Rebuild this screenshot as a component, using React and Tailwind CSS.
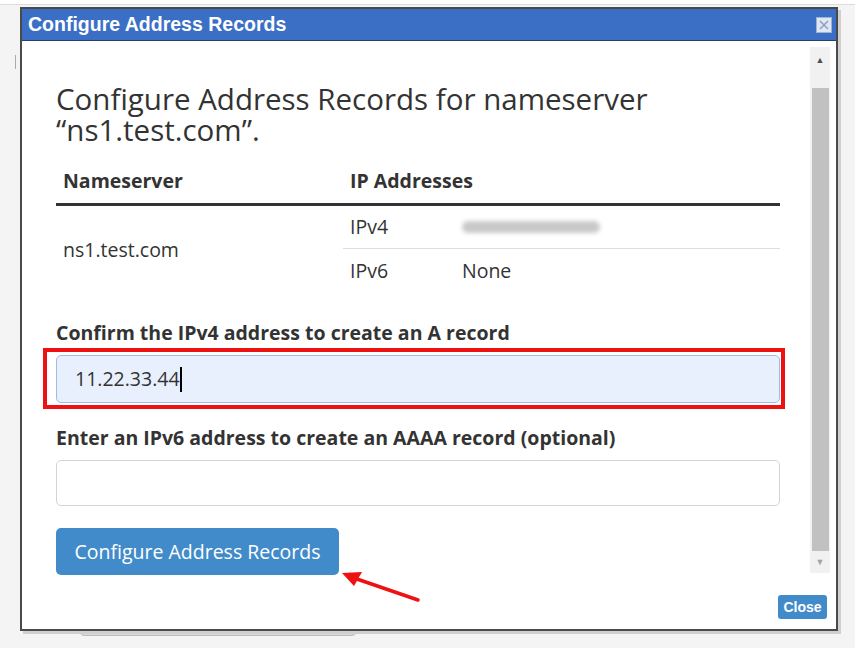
import React from 'react';

const sans = { fontFamily: '"Open Sans", "Noto Sans", sans-serif' };

function Scrollbar() {
  return (
    <div className="w-[20px] h-full bg-[#f1f1f1] flex flex-col items-center">
      <div className="h-[26px] w-full flex items-center justify-center text-[9px] text-[#505050]">▲</div>
      <div className="h-[15px]" />
      <div className="flex-1 w-[17px] bg-[#c1c1c1]" />
      <div className="h-[22px] w-full flex items-center justify-center text-[9px] text-[#a3a3a3]">▼</div>
    </div>
  );
}

export default function App() {
  return (
    <div className="relative w-[855px] h-[648px] overflow-hidden bg-[#f4f4f4]">
      {/* page behind the dialog */}
      <div className="h-[5px] bg-white border-b border-[#dcdcdc]" />
      <div className="absolute left-[80px] top-[628px] w-[276px] h-[8px] rounded-b-[4px] bg-[#d9d9d9] border border-[#bbbbbb]" />
      <div className="absolute left-[15px] top-[55px] w-[1px] h-[14px] bg-[#aaaaaa]" />

      {/* dialog */}
      <div className="absolute left-[20px] top-[7px] w-[818px] h-[624px] border-2 border-[#4a4a4a] bg-white flex flex-col shadow-[3px_3px_0_#cfcfcf]">
        <div className="h-[32px] bg-[#3b6fc6] border-b border-[#2a3f66] flex items-center justify-between pl-[6px] pr-[4px]">
          <span className="text-white font-bold text-[19.5px]" style={{ fontFamily: '"Liberation Sans", Arial, sans-serif' }}>
            Configure Address Records
          </span>
          <span className="w-[16px] h-[16px] bg-[#dfe7f3] border border-[#9fb3d3] flex items-center justify-center">
            <svg width="12" height="12" viewBox="0 0 12 12">
              <path d="M2 2 L10 10 M10 2 L2 10" stroke="#8fa2c0" strokeWidth="1.6" />
            </svg>
          </span>
        </div>

        <div className="flex pt-[6px] pr-[6px] h-[532px]">
          <div className="flex-1 pl-[34px] pr-[30px] pt-[36px] text-[#333333]" style={sans}>
            <h1 className="text-[29.5px] leading-[31px] font-normal text-[#333333]">
              Configure Address Records for nameserver
              <br />
              “ns1.test.com”.
            </h1>

            <div className="mt-[16px] text-[19.5px]">
              <div className="flex h-[45px] pb-[3px] border-b-[3px] border-[#333333] items-center">
                <div className="w-[287px] pl-[7px] font-bold">Nameserver</div>
                <div className="pl-[7px] font-bold">IP Addresses</div>
              </div>
              <div className="flex">
                <div className="w-[287px] pl-[7px] flex items-center">ns1.test.com</div>
                <div className="flex-1">
                  <div className="flex h-[43px] items-center border-b border-[#dddddd]">
                    <span className="w-[119px] pl-[7px]">IPv4</span>
                    <span className="w-[138px] h-[12px] rounded-full bg-[#c9c9c9] blur-[2px]" />
                  </div>
                  <div className="flex h-[44px] items-center">
                    <span className="w-[119px] pl-[7px]">IPv6</span>
                    <span>None</span>
                  </div>
                </div>
              </div>
            </div>

            <div className="mt-[25px] text-[19.5px] leading-[30px] font-bold">Confirm the IPv4 address to create an A record</div>
            <div className="-ml-[13px] -mr-[5px] border-[4px] border-[#ee1111] pl-[9px] pr-[1px] pt-[3px] pb-[2px]">
              <div className="h-[48px] rounded-[5px] border border-[#9cbde6] bg-[#e8f0fe] flex items-center pl-[18px] text-[19.5px] text-[#333333]">
                11.22.33.44
                <span className="inline-block w-[2px] h-[25px] bg-black" />
              </div>
            </div>

            <div className="mt-[14px] text-[19.5px] leading-[30px] font-bold">Enter an IPv6 address to create an AAAA record (optional)</div>
            <div className="mt-[7px] h-[46px] rounded-[5px] border border-[#d4d4d4] bg-white" />

            <button className="mt-[22px] h-[47px] w-[283px] rounded-[5px] bg-[#428bca] text-white text-[19.5px]" style={sans}>
              Configure Address Records
            </button>
          </div>
          <Scrollbar />
        </div>

        <div className="flex-1 flex justify-end items-end pr-[9px] pb-[10px]">
          <button
            className="h-[24px] w-[49px] rounded-[3px] bg-[#428bca] text-white text-[14px] font-bold"
            style={{ fontFamily: '"Liberation Sans", Arial, sans-serif' }}
          >
            Close
          </button>
        </div>
      </div>

      {/* annotation arrow */}
      <svg className="absolute left-[336px] top-[566px]" width="90" height="42" viewBox="0 0 90 42">
        <path d="M82 34 L18 12" stroke="#ee1111" strokeWidth="3.5" strokeLinecap="round" />
        <path d="M6 7 L26 6 L18 20 Z" fill="#ee1111" />
      </svg>
    </div>
  );
}
